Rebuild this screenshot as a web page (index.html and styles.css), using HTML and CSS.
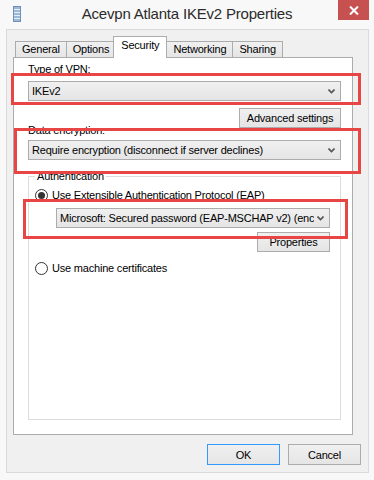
FILE: index.html
```html
<!DOCTYPE html>
<html lang="en">
<head>
    <meta charset="UTF-8">
    <meta name="viewport" content="width=device-width, initial-scale=1.0">
    <title>Acevpn Atlanta IKEv2 Properties</title>
    <link rel="stylesheet" href="styles.css">
</head>
<body>
    <div class="window">
        <header class="titlebar">
            <svg class="app-icon" width="8" height="16" viewBox="0 0 8 16">
                <rect x="0.5" y="0.5" width="7" height="15" fill="#9db8d8" stroke="#6f8fb8"/>
                <rect x="1" y="3" width="6" height="1" fill="#e6eef8"/>
                <rect x="1" y="6" width="6" height="1" fill="#e6eef8"/>
                <rect x="1" y="9" width="6" height="1" fill="#e6eef8"/>
                <rect x="1" y="12" width="6" height="1" fill="#e6eef8"/>
            </svg>
            <div class="title">Acevpn Atlanta IKEv2 Properties</div>
            <div class="close">
                <svg width="10" height="9" viewBox="0 0 10 9">
                    <path d="M1 0.5 L9 8.5 M9 0.5 L1 8.5" stroke="#fff" stroke-width="2"/>
                </svg>
            </div>
        </header>

        <div class="client">
            <div class="tabs">
                <div class="tab">General</div>
                <div class="tab">Options</div>
                <div class="tab active">Security</div>
                <div class="tab">Networking</div>
                <div class="tab">Sharing</div>
            </div>

            <div class="panel">
                <div class="label">Type of VPN:</div>
                <div class="combo">
                    <span class="combo-text">IKEv2</span>
                    <svg class="chevron" width="7" height="5" viewBox="0 0 7 5"><path d="M0.5 0.5 L3.5 3.5 L6.5 0.5" fill="none" stroke="#555" stroke-width="1.6"/></svg>
                </div>
                <div class="right-row">
                    <button class="btn btn-advanced">Advanced settings</button>
                </div>

                <div class="label label-tight">Data encryption:</div>
                <div class="combo combo-enc">
                    <span class="combo-text">Require encryption (disconnect if server declines)</span>
                    <svg class="chevron" width="7" height="5" viewBox="0 0 7 5"><path d="M0.5 0.5 L3.5 3.5 L6.5 0.5" fill="none" stroke="#555" stroke-width="1.6"/></svg>
                </div>

                <fieldset class="group">
                    <legend>Authentication</legend>
                    <div class="radio-row">
                        <span class="radio checked"></span>
                        <span>Use Extensible Authentication Protocol (EAP)</span>
                    </div>
                    <div class="combo combo-eap">
                        <span class="combo-text">Microsoft: Secured password (EAP-MSCHAP v2) (encryption enabled)</span>
                        <svg class="chevron" width="7" height="5" viewBox="0 0 7 5"><path d="M0.5 0.5 L3.5 3.5 L6.5 0.5" fill="none" stroke="#555" stroke-width="1.6"/></svg>
                    </div>
                    <div class="right-row">
                        <button class="btn btn-props">Properties</button>
                    </div>
                    <div class="radio-row radio-row-second">
                        <span class="radio"></span>
                        <span>Use machine certificates</span>
                    </div>
                </fieldset>
            </div>

            <div class="actions">
                <button class="btn btn-default">OK</button>
                <button class="btn">Cancel</button>
            </div>
        </div>

        <!-- red annotation boxes drawn over the dialog -->
        <div class="mark mark-vpn"></div>
        <div class="mark mark-enc"></div>
        <div class="mark mark-eap"></div>
    </div>
</body>
</html>
```

FILE: styles.css
```css
body {
    margin: 0;
    padding: 0;
    font-family: "Liberation Sans", Arial, sans-serif;
    font-size: 11px;
    letter-spacing: -0.2px;
    color: #000;
}

.window {
    position: relative;
    width: 374px;
    height: 480px;
    background-color: #f8f8f8;
    display: flex;
    flex-direction: column;
}

/* title bar */
.titlebar {
    height: 29px;
    flex-shrink: 0;
    display: grid;
    grid-template-columns: 1fr auto 1fr;
    align-items: start;
}

.app-icon {
    margin: 6px 0 0 13px;
}

.title {
    font-size: 15px;
    line-height: 20px;
    padding-top: 4px;
    color: #2b2b2b;
    letter-spacing: -0.2px;
}

.close {
    justify-self: end;
    width: 31px;
    height: 20px;
    margin-right: 5px;
    background-color: #c75050;
    display: flex;
    align-items: center;
    justify-content: center;
}

/* dialog body */
.client {
    flex: 1;
    min-height: 0;
    margin: 0 5px 7px 6px;
    border: 1px solid #dadada;
    background-color: #f0f0f0;
    padding: 7px 7px 7px 0;
    display: flex;
    flex-direction: column;
}

.tabs {
    height: 20px;
    flex-shrink: 0;
    padding-left: 8px;
    display: flex;
    align-items: flex-end;
    position: relative;
    z-index: 1;
}

.tab {
    height: 15px;
    line-height: 15px;
    padding: 0 6px;
    border: 1px solid #acacac;
    border-bottom: none;
    margin-right: -1px;
    background: linear-gradient(#f0f0f0, #e5e5e5);
}

.tab.active {
    height: 21px;
    line-height: 17px;
    margin: 0 -1px 0 -2px;
    padding: 0 7px;
    background: #fff;
    position: relative;
    top: 1px;
}

.panel {
    height: 378px;
    box-sizing: border-box;
    flex-shrink: 0;
    margin: 0 8px 0 6px;
    border: 1px solid #acacac;
    background-color: #fff;
    padding-top: 5px;
}

.label {
    line-height: 13px;
    margin-left: 14px;
}

.label-tight {
    margin-top: -4px;
}

.combo {
    height: 18px;
    min-width: 0;
    margin: 5px 11px 0 14px;
    border: 1px solid #acacac;
    background: linear-gradient(#f0f0f0, #e5e5e5);
    display: flex;
    align-items: center;
    padding-left: 3px;
}

.combo-enc {
    margin-top: 3px;
}

.combo-text {
    flex: 1;
    min-width: 0;
    white-space: nowrap;
    overflow: hidden;
}

.chevron {
    flex-shrink: 0;
    margin: 0 5px 0 3px;
}

.right-row {
    display: flex;
    justify-content: flex-end;
    margin-right: 11px;
    margin-top: 7px;
}

.btn {
    height: 20px;
    font-family: "Liberation Sans", Arial, sans-serif;
    font-size: 11px;
    letter-spacing: -0.2px;
    color: #000;
    border: 1px solid #acacac;
    background: linear-gradient(#f0f0f0, #e5e5e5);
    padding: 0;
}

.btn-advanced {
    width: 102px;
}

.group {
    height: 250px;
    min-width: 0;
    box-sizing: border-box;
    margin: 10px 11px 0 14px;
    padding: 0 10px 0 6px;
    border: 1px solid #dcdcdc;
}

.group legend {
    line-height: 13px;
    padding: 0 2px;
}

.radio-row {
    display: flex;
    align-items: center;
    gap: 4px;
    line-height: 13px;
    margin-top: 6px;
}

.radio-row-second {
    margin-top: 10px;
}

.radio {
    width: 11px;
    height: 11px;
    border: 1px solid #333;
    border-radius: 50%;
    background: #fff;
    display: flex;
    align-items: center;
    justify-content: center;
}

.radio.checked::after {
    content: "";
    width: 7px;
    height: 7px;
    border-radius: 50%;
    background-color: #333;
}

.combo-eap {
    margin: 6px 0 0 21px;
}

.group .right-row {
    margin: 4px 0 0 0;
}

.btn-props {
    width: 73px;
}

.actions {
    display: flex;
    justify-content: flex-end;
    gap: 8px;
    margin-top: 9px;
}

.actions .btn {
    width: 73px;
    height: 21px;
}

.btn-default {
    border-color: #3399ff;
}

/* annotations */
.mark {
    position: absolute;
    border: 3px solid #e84545;
    box-sizing: border-box;
}

.mark-vpn {
    left: 11px;
    top: 73px;
    width: 350px;
    height: 32px;
}

.mark-enc {
    left: 14px;
    top: 128px;
    width: 347px;
    height: 46px;
}

.mark-eap {
    left: 23px;
    top: 199px;
    width: 325px;
    height: 40px;
}
```
